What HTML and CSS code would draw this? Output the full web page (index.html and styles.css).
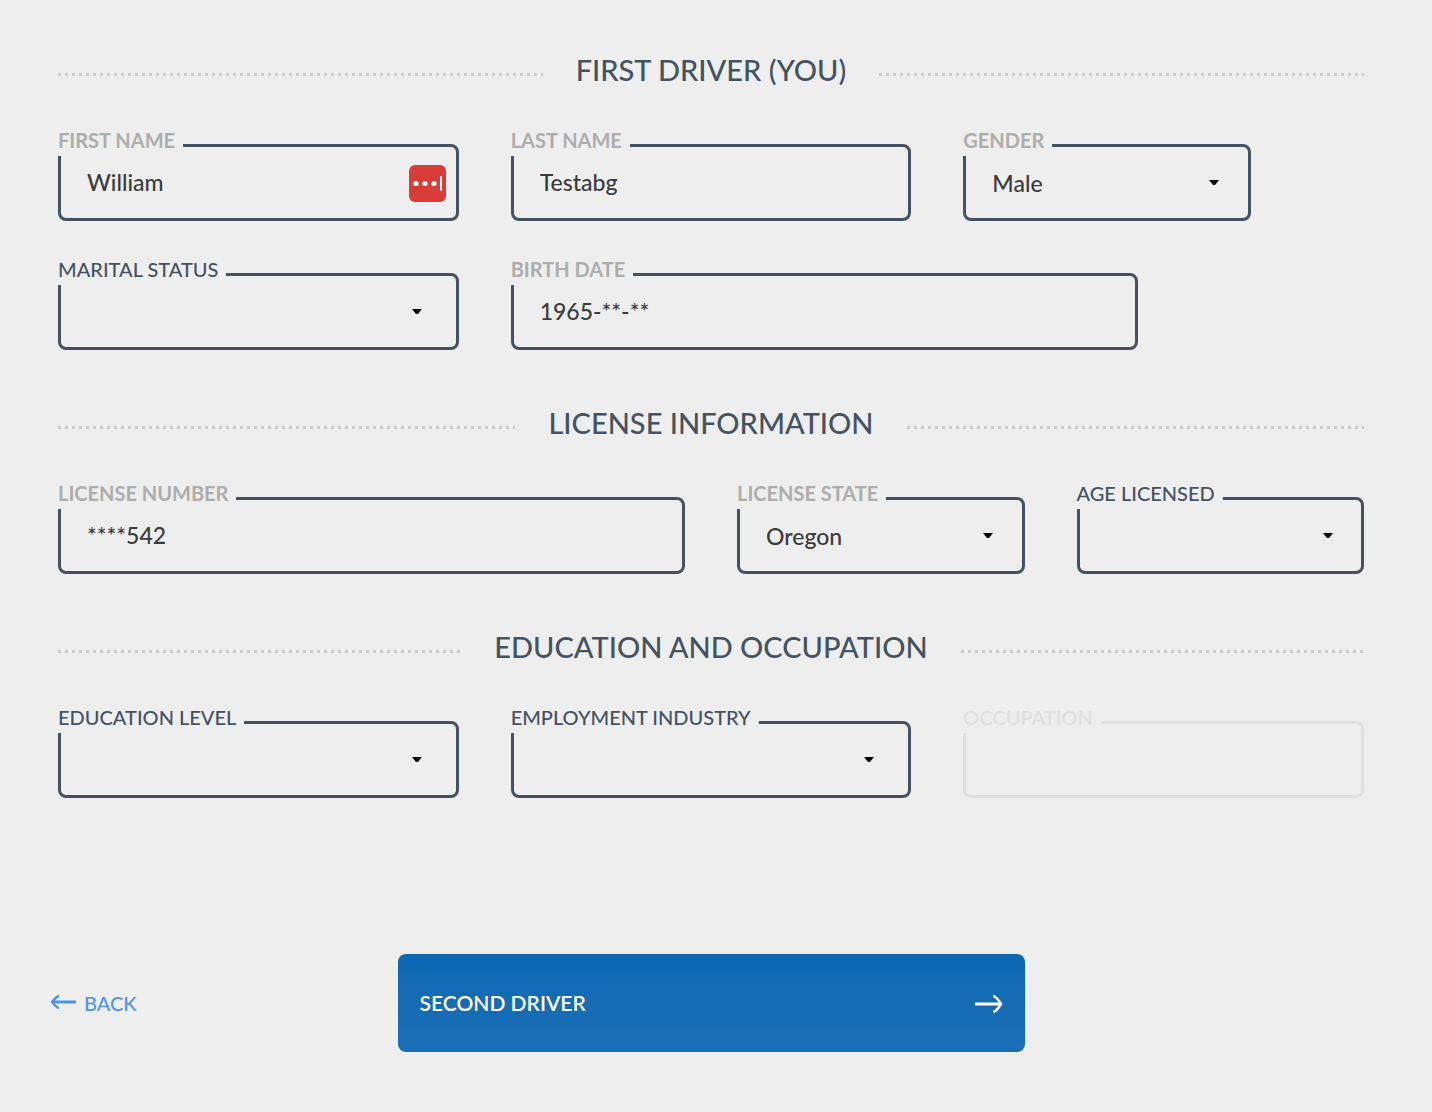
FILE: index.html
```html
<!DOCTYPE html>
<html lang="en">
<head>
<meta charset="utf-8">
<meta name="viewport" content="width=device-width, initial-scale=1">
<title>First Driver</title>
<link rel="stylesheet" href="styles.css">
</head>
<body>
<form class="form">
  <section class="section">
    <h2 class="heading">FIRST DRIVER (YOU)</h2>
    <div class="grid">
      <div class="field span-4 filled">
        <label for="first">FIRST NAME</label>
        <input class="control" id="first" type="text" value="William">
        <svg class="manager" viewBox="0 0 37 37" aria-hidden="true">
          <rect width="37" height="37" rx="6" fill="#d83d3a"/>
          <g fill="#fff"><circle cx="7" cy="18.5" r="2.6"/><circle cx="16" cy="18.5" r="2.6"/><circle cx="25" cy="18.5" r="2.6"/><rect x="31" y="11" width="2" height="15" rx="1"/></g>
        </svg>
      </div>
      <div class="field span-4 filled">
        <label for="last">LAST NAME</label>
        <input class="control" id="last" type="text" value="Testabg">
      </div>
      <div class="field span-3 filled">
        <label for="gender">GENDER</label>
        <select class="control" id="gender"><option>Male</option><option>Female</option></select>
        <svg class="caret" viewBox="0 0 10 6" aria-hidden="true"><path d="M0 0h10L6 5H4z"/></svg>
      </div>
      <div class="field span-4 row-start">
        <label for="marital">MARITAL STATUS</label>
        <select class="control" id="marital"><option></option></select>
        <svg class="caret" viewBox="0 0 10 6" aria-hidden="true"><path d="M0 0h10L6 5H4z"/></svg>
      </div>
      <div class="field span-6 filled">
        <label for="birth">BIRTH DATE</label>
        <input class="control" id="birth" type="text" value="1965-**-**">
      </div>
    </div>
  </section>

  <section class="section">
    <h2 class="heading">LICENSE INFORMATION</h2>
    <div class="grid">
      <div class="field span-6 filled">
        <label for="license">LICENSE NUMBER</label>
        <input class="control" id="license" type="text" value="****542">
      </div>
      <div class="field span-3 filled">
        <label for="state">LICENSE STATE</label>
        <select class="control" id="state"><option>Oregon</option></select>
        <svg class="caret" viewBox="0 0 10 6" aria-hidden="true"><path d="M0 0h10L6 5H4z"/></svg>
      </div>
      <div class="field span-3">
        <label for="age">AGE LICENSED</label>
        <select class="control" id="age"><option></option></select>
        <svg class="caret" viewBox="0 0 10 6" aria-hidden="true"><path d="M0 0h10L6 5H4z"/></svg>
      </div>
    </div>
  </section>

  <section class="section">
    <h2 class="heading">EDUCATION AND OCCUPATION</h2>
    <div class="grid">
      <div class="field span-4">
        <label for="education">EDUCATION LEVEL</label>
        <select class="control" id="education"><option></option></select>
        <svg class="caret" viewBox="0 0 10 6" aria-hidden="true"><path d="M0 0h10L6 5H4z"/></svg>
      </div>
      <div class="field span-4">
        <label for="industry">EMPLOYMENT INDUSTRY</label>
        <select class="control" id="industry"><option></option></select>
        <svg class="caret" viewBox="0 0 10 6" aria-hidden="true"><path d="M0 0h10L6 5H4z"/></svg>
      </div>
      <div class="field span-4 disabled">
        <label for="occupation">OCCUPATION</label>
        <input class="control" id="occupation" type="text" disabled>
      </div>
    </div>
  </section>

  <div class="grid actions">
    <a class="back span-3" href="#">
      <svg width="26" height="18" viewBox="0 0 26 18" fill="none" stroke="currentColor" stroke-width="3" aria-hidden="true"><path d="M26 8H3"/><path d="M9 2Q7 2 2 8Q7 14 9 14" stroke-width="2.4"/></svg>
      BACK
    </a>
    <button class="next span-6" type="submit">
      SECOND DRIVER
      <svg width="28" height="20" viewBox="0 0 28 20" fill="none" stroke="currentColor" stroke-width="3" aria-hidden="true"><path d="M0 11h26"/><path d="M18 3Q21 3 26 11Q21 19 18 19" stroke-width="2.6"/></svg>
    </button>
  </div>
</form>
</body>
</html>
```
FILE: styles.css
```css
:root {
  --page: #eeeeee;
  --ink: #455261;
}

* {
  box-sizing: border-box;
}

body {
  margin: 0;
  background: var(--page);
  color: var(--ink);
  font-family: Lato, sans-serif;
}

.form {
  padding: 52px 68px 60px 58px;
}

.section + .section {
  margin-top: 55px;
}

.heading {
  display: flex;
  align-items: center;
  gap: 33px;
  margin: 0 0 56px;
  font-size: 29px;
  font-weight: 500;
  line-height: 36px;
  white-space: nowrap;
}

.heading::before,
.heading::after {
  content: "";
  flex: 1;
  height: 3px;
  margin-top: 9px;
  background: repeating-linear-gradient(90deg, #cbcbcb 0 3px, transparent 3px 7px);
}

.grid {
  display: grid;
  grid-template-columns: repeat(12, minmax(0, 1fr));
  gap: 52px;
}

.span-3 { grid-column-end: span 3; }
.span-4 { grid-column-end: span 4; }
.span-6 { grid-column-end: span 6; }
.row-start { grid-column-start: 1; }

.field {
  position: relative;
}

/* The label sits over the top left corner and interrupts the border. */
.field label {
  position: absolute;
  top: -14px;
  left: 0;
  height: 26px;
  padding-right: 8px;
  background: var(--page);
  font-size: 20px;
  font-weight: 500;
  line-height: 20px;
  white-space: nowrap;
}

.filled label {
  color: #adadad;
  font-weight: 700;
}

.control {
  display: block;
  width: 100%;
  height: 77px;
  padding: 0 26px 2px;
  border: 3px solid var(--ink);
  border-radius: 8px;
  outline: 0;
  appearance: none;
  background: transparent;
  color: #3b3b3b;
  font: 500 23px/28px Lato, sans-serif;
}

select.control {
  padding-top: 2px;
}

.disabled label {
  color: #e0e0e0;
}

.disabled .control {
  border-color: #e1e1e1;
}

.caret {
  position: absolute;
  top: 36px;
  right: calc(5% + 17px);
  width: 10px;
  height: 6px;
  pointer-events: none;
}

.manager {
  position: absolute;
  top: 21px;
  right: 13px;
  width: 37px;
  height: 37px;
}

.actions {
  align-items: center;
  margin-top: 156px;
}

.back {
  display: flex;
  align-items: center;
  gap: 8px;
  margin-left: -8px;
  color: #4e95e4;
  font-size: 20px;
  font-weight: 500;
  text-decoration: none;
}

.next {
  display: flex;
  align-items: center;
  justify-content: space-between;
  height: 98px;
  padding: 0 22px;
  border: 0;
  border-radius: 8px;
  background: linear-gradient(#0d68b1, #1b6fb6);
  color: #fff;
  font: 600 21px/28px Lato, sans-serif;
}
```
